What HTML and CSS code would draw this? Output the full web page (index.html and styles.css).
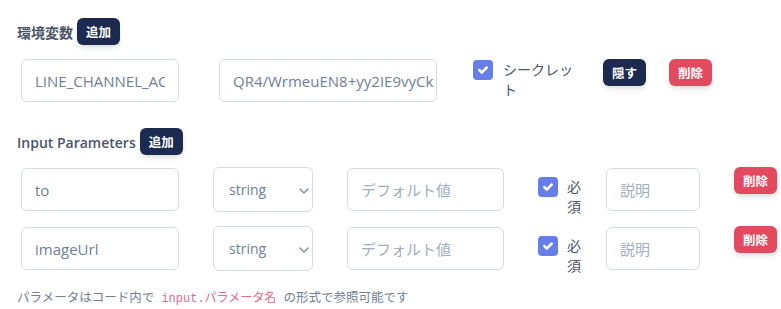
FILE: index.html
```html
<!DOCTYPE html>
<html lang="ja">
<head>
    <meta charset="utf-8">
    <title>ワークフロー設定</title>
    <link rel="stylesheet" href="styles.css">
</head>
<body>
    <div class="section-head">
        <h3 class="section-title">環境変数</h3>
        <button class="btn btn-dark">追加</button>
    </div>
    <div class="row env-row">
        <input class="field env-key" type="text" value="LINE_CHANNEL_ACCESS_TOKEN">
        <input class="field env-value" type="text" value="QR4/WrmeuEN8+yy2IE9vyCkx0aJ5rT">
        <label class="check env-check">
            <span class="check-box">
                <svg width="20" height="20" viewBox="0 0 16 16" fill="#fff"><path d="M5.707 7.293a1 1 0 0 0-1.414 1.414l2 2a1 1 0 0 0 1.414 0l4-4a1 1 0 0 0-1.414-1.414L7 8.586 5.707 7.293z"/></svg>
            </span>
            <span class="check-label">シークレット</span>
        </label>
        <button class="btn btn-dark btn-gap">隠す</button>
        <button class="btn btn-red">削除</button>
    </div>

    <div class="section-head params-head">
        <h3 class="section-title">Input Parameters</h3>
        <button class="btn btn-dark">追加</button>
    </div>
    <div class="param-list">
        <div class="row param-row">
            <input class="field param-name" type="text" value="to">
            <div class="select-wrap">
                <select class="select">
                    <option>string</option>
                    <option>number</option>
                    <option>boolean</option>
                </select>
                <svg class="select-arrow" width="10" height="6" viewBox="0 0 10 6" fill="none" stroke="currentColor" stroke-width="1.6" stroke-linecap="round" stroke-linejoin="round"><polyline points="1,1 5,5 9,1"/></svg>
            </div>
            <input class="field param-default" type="text" placeholder="デフォルト値">
            <label class="check param-check">
                <span class="check-box">
                    <svg width="20" height="20" viewBox="0 0 16 16" fill="#fff"><path d="M5.707 7.293a1 1 0 0 0-1.414 1.414l2 2a1 1 0 0 0 1.414 0l4-4a1 1 0 0 0-1.414-1.414L7 8.586 5.707 7.293z"/></svg>
                </span>
                <span class="check-label">必須</span>
            </label>
            <input class="field param-desc" type="text" placeholder="説明">
            <button class="btn btn-red">削除</button>
        </div>
        <div class="row param-row">
            <input class="field param-name" type="text" value="imageUrl">
            <div class="select-wrap">
                <select class="select">
                    <option>string</option>
                    <option>number</option>
                    <option>boolean</option>
                </select>
                <svg class="select-arrow" width="10" height="6" viewBox="0 0 10 6" fill="none" stroke="currentColor" stroke-width="1.6" stroke-linecap="round" stroke-linejoin="round"><polyline points="1,1 5,5 9,1"/></svg>
            </div>
            <input class="field param-default" type="text" placeholder="デフォルト値">
            <label class="check param-check">
                <span class="check-box">
                    <svg width="20" height="20" viewBox="0 0 16 16" fill="#fff"><path d="M5.707 7.293a1 1 0 0 0-1.414 1.414l2 2a1 1 0 0 0 1.414 0l4-4a1 1 0 0 0-1.414-1.414L7 8.586 5.707 7.293z"/></svg>
                </span>
                <span class="check-label">必須</span>
            </label>
            <input class="field param-desc" type="text" placeholder="説明">
            <button class="btn btn-red">削除</button>
        </div>
    </div>

    <p class="hint">パラメータはコード内で <code>input.パラメータ名</code> の形式で参照可能です</p>
</body>
</html>
```

FILE: styles.css
```css
body {
    margin: 0;
    padding: 18px 17px 0 17px;
    background-color: #fff;
    font-family: "Open Sans", "Noto Sans CJK JP", sans-serif;
    color: #4a5568;
}

.section-head {
    display: flex;
    align-items: center;
}

.params-head {
    margin-top: 26px;
}

.section-title {
    margin: 2px 4px 0 0;
    font-size: 14px;
    font-weight: 600;
    line-height: 20px;
    color: #4a5568;
}

.btn {
    flex-shrink: 0;
    height: 27px;
    padding: 0 9px;
    border: none;
    border-radius: 6px;
    font-family: "Noto Sans CJK JP", sans-serif;
    font-size: 12.5px;
    font-weight: 700;
    line-height: 27px;
    color: #fff;
    box-shadow: 0 4px 6px -1px rgba(0, 0, 0, 0.1), 0 2px 4px -1px rgba(0, 0, 0, 0.06);
    cursor: pointer;
}

.btn-dark {
    background-color: #1b2a4e;
}

.btn-red {
    background-color: #e3495f;
}

.btn-gap {
    margin-right: 23px;
}

.row {
    display: flex;
    align-items: flex-start;
    padding-left: 4px;
}

.env-row {
    margin-top: 14px;
}

.param-list {
    display: flex;
    flex-direction: column;
    gap: 9px;
    margin-top: 12px;
}

.field {
    flex-shrink: 0;
    box-sizing: border-box;
    height: 43px;
    padding: 0 13px;
    border: 1px solid #d5dbe3;
    border-radius: 6px;
    background-color: #fff;
    font-family: "Open Sans", "Noto Sans CJK JP", sans-serif;
    font-size: 15px;
    color: #718096;
    outline: none;
}

.field::placeholder {
    color: #a0aec0;
}

.env-key {
    width: 158px;
    margin-right: 40px;
}

.env-value {
    width: 218px;
    margin-right: 36px;
    padding-right: 2px;
}

.param-row .field {
    margin-top: 1px;
}

.param-name {
    width: 158px;
    margin-right: 34px;
}

.param-default {
    width: 157px;
    margin-right: 34px;
}

.param-desc {
    width: 94px;
    margin-right: 34px;
}

.select-wrap {
    position: relative;
    flex-shrink: 0;
    width: 100px;
    margin-right: 34px;
    color: #8a94a6;
}

.select {
    appearance: none;
    box-sizing: border-box;
    width: 100%;
    height: 45px;
    padding: 0 15px;
    border: 1px solid #d5dbe3;
    border-radius: 6px;
    background-color: #fff;
    font-family: "Open Sans", sans-serif;
    font-size: 14px;
    color: #718096;
    outline: none;
}

.select-arrow {
    position: absolute;
    top: 50%;
    right: 4px;
    margin-top: -2px;
    pointer-events: none;
}

.check {
    display: flex;
    align-items: flex-start;
    flex-shrink: 0;
    font-size: 14px;
    line-height: 20px;
    color: #4a5568;
}

.check-box {
    flex-shrink: 0;
    width: 20px;
    height: 20px;
    border-radius: 4px;
    background-color: #667eea;
}

.check-box svg {
    display: block;
}

.env-check {
    margin: 1px 20px 0 0;
}

.env-check .check-label {
    width: 80px;
    margin-left: 10px;
}

.param-check {
    margin: 10px 24px 0 0;
}

.param-check .check-label {
    width: 15px;
    margin-left: 9px;
}

.hint {
    margin: 13px 0 0 0;
    font-size: 12.5px;
    line-height: 18px;
    color: #718096;
}

.hint code {
    padding: 0 4px;
    font-family: "Liberation Mono", "Noto Sans CJK JP", monospace;
    font-size: 12px;
    color: #e3698a;
}
```
